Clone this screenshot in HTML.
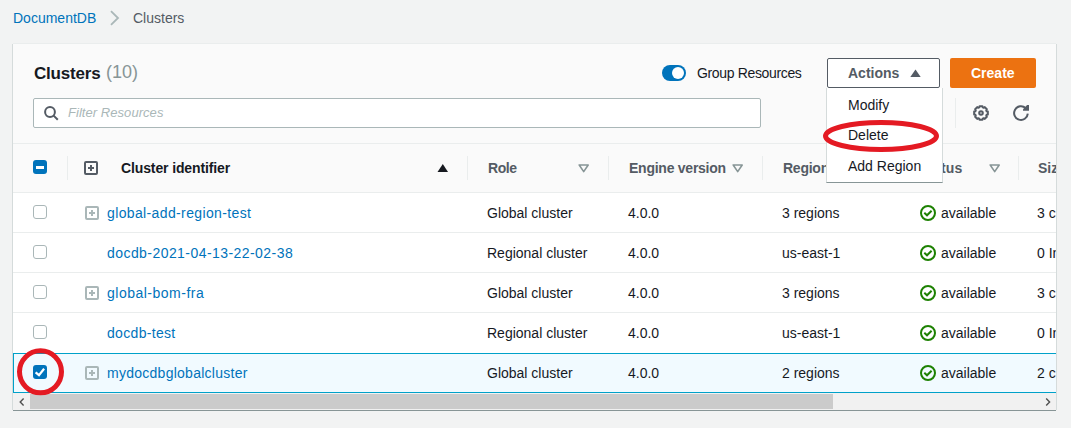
<!DOCTYPE html>
<html><head><meta charset="utf-8">
<style>
*{box-sizing:border-box;margin:0;padding:0}
html,body{width:1071px;height:428px;overflow:hidden;background:#f2f3f3;font-family:"Liberation Sans",sans-serif;font-size:14px;color:#16191f}
.t{position:absolute;white-space:nowrap;line-height:20px}
.a{position:absolute}
.b{font-weight:700}
.lnk{color:#0073bb}
.panel{position:absolute;left:13px;top:44px;width:1043px;height:366px;background:#fafafa;box-shadow:0 -1px 0 0 #eaeded,-1px 0 0 0 #d5dbdb,1px 0 0 0 #d5dbdb,0 1px 0 0 #879596;overflow:hidden}
.in{position:absolute;left:-13px;top:-44px;width:1071px;height:428px}
.row{position:absolute;left:13px;width:1043px;height:40px;background:#fff;border-bottom:1px solid #eaeded}
.sep{position:absolute;width:1px;height:24px;background:#eaeded}
.cb{position:absolute;left:33px;width:14px;height:14px;border:1px solid #aab7b8;border-radius:3px;background:#fff}
.ex{position:absolute;left:85px;width:14px;height:14px;border:2px solid #aab7b8;border-radius:2px}
.ex:before{content:"";position:absolute;left:2px;top:4px;width:6px;height:2px;background:#aab7b8}
.ex:after{content:"";position:absolute;left:4px;top:2px;width:2px;height:6px;background:#aab7b8}
.exd{border-color:#545b64}.exd:before,.exd:after{background:#545b64}
</style></head><body>
<div class="t lnk" style="left:13px;top:8px">DocumentDB</div>
<svg class="a" style="left:108px;top:10px" width="14" height="16" viewBox="0 0 14 16"><path d="M3 1.2 L10 8 L3 14.8" fill="none" stroke="#aab7b8" stroke-width="1.8"/></svg>
<div class="t" style="left:133px;top:8px;color:#545b64">Clusters</div>
<div class="panel"><div class="in">
<div class="t b" style="left:34px;top:64px;font-size:17px;letter-spacing:-0.2px">Clusters</div>
<div class="t" style="left:106px;top:62px;font-size:18px;color:#879596">(10)</div>
<div class="a" style="left:662px;top:65px;width:24px;height:16px;border-radius:8px;background:#0073bb"></div>
<div class="a" style="left:672px;top:67px;width:12px;height:12px;border-radius:6px;background:#fff"></div>
<div class="t" style="left:697px;top:63px;letter-spacing:-0.35px">Group Resources</div>
<div class="a" style="left:827px;top:58px;width:113px;height:30px;border:1px solid #545b64;border-radius:2px;background:#fff"></div>
<div class="t b" style="left:848px;top:63px;color:#545b64">Actions</div>
<svg class="a" style="left:910px;top:69px" width="11" height="9" viewBox="0 0 11 9"><path d="M0.3 8 L5.5 0.5 L10.7 8 Z" fill="#545b64"/></svg>
<div class="a" style="left:950px;top:58px;width:86px;height:30px;border-radius:2px;background:#ec7211"></div>
<div class="t b" style="left:971px;top:63px;color:#fff">Create</div>
<div class="a" style="left:33px;top:98px;width:728px;height:30px;border:1px solid #aab7b8;border-radius:2px;background:#fff"></div>
<svg class="a" style="left:43px;top:105px" width="17" height="17" viewBox="0 0 17 17"><circle cx="7" cy="7" r="4.9" fill="none" stroke="#545b64" stroke-width="2"/><path d="M10.6 10.6 L14.8 14.8" stroke="#545b64" stroke-width="2"/></svg>
<div class="t" style="left:68px;top:103px;font-size:13px;font-style:italic;color:#aab7b8;letter-spacing:0.05px">Filter Resources</div>
<div class="a" style="left:955px;top:98px;width:1px;height:30px;background:#eaeded"></div>
<svg class="a" style="left:973px;top:105px" width="16" height="16" viewBox="0 0 16 16"><path d="M6.28 2.36 L6.54 1.15 L9.46 1.15 L9.72 2.36 L10.77 2.79 L11.81 2.13 L13.87 4.19 L13.21 5.23 L13.64 6.28 L14.85 6.54 L14.85 9.46 L13.64 9.72 L13.21 10.77 L13.87 11.81 L11.81 13.87 L10.77 13.21 L9.72 13.64 L9.46 14.85 L6.54 14.85 L6.28 13.64 L5.23 13.21 L4.19 13.87 L2.13 11.81 L2.79 10.77 L2.36 9.72 L1.15 9.46 L1.15 6.54 L2.36 6.28 L2.79 5.23 L2.13 4.19 L4.19 2.13 L5.23 2.79Z" fill="none" stroke="#545b64" stroke-width="2" stroke-linejoin="round"/><circle cx="8" cy="8" r="1.8" fill="none" stroke="#545b64" stroke-width="2"/></svg>
<svg class="a" style="left:1013px;top:105px" width="16" height="16" viewBox="0 0 16 16"><path d="M14.8 8.6 A6.85 6.85 0 1 1 12.6 3.0" fill="none" stroke="#545b64" stroke-width="2"/><path d="M14.1 0 L16 0 L16 5.8 L10 5.8 L10 4.2 Z" fill="#545b64"/></svg>
<div class="a" style="left:13px;top:143px;width:1043px;height:50px;background:#fafafa;border-top:1px solid #eaeded;border-bottom:1px solid #eaeded"></div>
<div class="a" style="left:33px;top:160px;width:14px;height:14px;border-radius:3px;background:#0073bb"></div>
<div class="a" style="left:36px;top:165.5px;width:8px;height:3px;background:#fff"></div>
<div class="sep" style="left:67px;top:156px"></div>
<div class="sep" style="left:467px;top:156px"></div>
<div class="sep" style="left:608px;top:156px"></div>
<div class="sep" style="left:762px;top:156px"></div>
<div class="sep" style="left:1018px;top:156px"></div>
<div class="ex exd" style="left:84px;top:161px"></div>
<div class="t b" style="left:121px;top:158px;letter-spacing:-0.12px">Cluster identifier</div>
<svg class="a" style="left:437px;top:164px" width="12" height="9" viewBox="0 0 12 9"><path d="M0.5 8 L5.8 0 L11 8 Z" fill="#16191f"/></svg>
<div class="t b" style="left:488px;top:158px;color:#545b64;letter-spacing:-0.4px">Role</div>
<svg class="a" style="left:578px;top:164px" width="12" height="9" viewBox="0 0 12 9"><path d="M1.2 1 L10.2 1 L5.7 7.6 Z" fill="none" stroke="#879596" stroke-width="1.6" stroke-linejoin="round"/></svg>
<div class="t b" style="left:629px;top:158px;color:#545b64;letter-spacing:-0.25px">Engine version</div>
<svg class="a" style="left:732px;top:164px" width="12" height="9" viewBox="0 0 12 9"><path d="M1.2 1 L10.2 1 L5.7 7.6 Z" fill="none" stroke="#879596" stroke-width="1.6" stroke-linejoin="round"/></svg>
<div class="t b" style="left:783px;top:158px;color:#545b64;letter-spacing:-0.25px">Region</div>
<div class="t b" style="left:919px;top:158px;color:#545b64;letter-spacing:0.1px">Status</div>
<svg class="a" style="left:989px;top:164px" width="12" height="9" viewBox="0 0 12 9"><path d="M1.2 1 L10.2 1 L5.7 7.6 Z" fill="none" stroke="#879596" stroke-width="1.6" stroke-linejoin="round"/></svg>
<div class="t b" style="left:1038px;top:158px;color:#545b64">Size</div>
<div class="row" style="top:193px"></div>
<div class="cb" style="top:205px"></div>
<div class="ex" style="top:206px"></div>
<div class="t lnk" style="left:107px;top:203px;letter-spacing:0.37px">global-add-region-test</div>
<div class="t" style="left:487px;top:203px">Global cluster</div>
<div class="t" style="left:628px;top:203px">4.0.0</div>
<div class="t" style="left:782px;top:203px">3 regions</div>
<svg class="a" style="left:920px;top:205px" width="16" height="16" viewBox="0 0 16 16"><circle cx="8" cy="8" r="7" fill="none" stroke="#1d8102" stroke-width="2"/><path d="M4.3 7.8 L7 10.3 L11.6 5.8" fill="none" stroke="#1d8102" stroke-width="2"/></svg>
<div class="t" style="left:941px;top:203px">available</div>
<div class="t" style="left:1037px;top:203px">3 clusters</div>
<div class="row" style="top:233px"></div>
<div class="cb" style="top:245px"></div>
<div class="t lnk" style="left:107px;top:243px;letter-spacing:0.44px">docdb-2021-04-13-22-02-38</div>
<div class="t" style="left:487px;top:243px">Regional cluster</div>
<div class="t" style="left:628px;top:243px">4.0.0</div>
<div class="t" style="left:782px;top:243px">us-east-1</div>
<svg class="a" style="left:920px;top:245px" width="16" height="16" viewBox="0 0 16 16"><circle cx="8" cy="8" r="7" fill="none" stroke="#1d8102" stroke-width="2"/><path d="M4.3 7.8 L7 10.3 L11.6 5.8" fill="none" stroke="#1d8102" stroke-width="2"/></svg>
<div class="t" style="left:941px;top:243px">available</div>
<div class="t" style="left:1037px;top:243px">0 Instances</div>
<div class="row" style="top:273px"></div>
<div class="cb" style="top:285px"></div>
<div class="ex" style="top:286px"></div>
<div class="t lnk" style="left:107px;top:283px;letter-spacing:0.5px">global-bom-fra</div>
<div class="t" style="left:487px;top:283px">Global cluster</div>
<div class="t" style="left:628px;top:283px">4.0.0</div>
<div class="t" style="left:782px;top:283px">3 regions</div>
<svg class="a" style="left:920px;top:285px" width="16" height="16" viewBox="0 0 16 16"><circle cx="8" cy="8" r="7" fill="none" stroke="#1d8102" stroke-width="2"/><path d="M4.3 7.8 L7 10.3 L11.6 5.8" fill="none" stroke="#1d8102" stroke-width="2"/></svg>
<div class="t" style="left:941px;top:283px">available</div>
<div class="t" style="left:1037px;top:283px">3 clusters</div>
<div class="row" style="top:313px;border-bottom-color:#fff"></div>
<div class="cb" style="top:325px"></div>
<div class="t lnk" style="left:107px;top:323px;letter-spacing:0.32px">docdb-test</div>
<div class="t" style="left:487px;top:323px">Regional cluster</div>
<div class="t" style="left:628px;top:323px">4.0.0</div>
<div class="t" style="left:782px;top:323px">us-east-1</div>
<svg class="a" style="left:920px;top:325px" width="16" height="16" viewBox="0 0 16 16"><circle cx="8" cy="8" r="7" fill="none" stroke="#1d8102" stroke-width="2"/><path d="M4.3 7.8 L7 10.3 L11.6 5.8" fill="none" stroke="#1d8102" stroke-width="2"/></svg>
<div class="t" style="left:941px;top:323px">available</div>
<div class="t" style="left:1037px;top:323px">0 Instances</div>
<div class="row" style="top:353px;background:#f1faff;border-bottom:none"></div>
<div class="a" style="left:13px;top:353px;width:1043px;height:1px;background:#00a1c9"></div>
<div class="a" style="left:13px;top:392px;width:1043px;height:1px;background:#00a1c9"></div>
<div class="a" style="left:13px;top:353px;width:1px;height:40px;background:#00a1c9"></div>
<div class="a" style="left:33px;top:365px;width:14px;height:14px;border-radius:3px;background:#0073bb"></div>
<svg class="a" style="left:33px;top:365px" width="14" height="14" viewBox="0 0 14 14"><path d="M2.6 7.3 L6 10.2 L11.1 3.8" fill="none" stroke="#fff" stroke-width="2.2"/></svg>
<div class="ex" style="top:366px"></div>
<div class="t lnk" style="left:107px;top:363px;letter-spacing:0.26px">mydocdbglobalcluster</div>
<div class="t" style="left:487px;top:363px">Global cluster</div>
<div class="t" style="left:628px;top:363px">4.0.0</div>
<div class="t" style="left:782px;top:363px">2 regions</div>
<svg class="a" style="left:920px;top:365px" width="16" height="16" viewBox="0 0 16 16"><circle cx="8" cy="8" r="7" fill="none" stroke="#1d8102" stroke-width="2"/><path d="M4.3 7.8 L7 10.3 L11.6 5.8" fill="none" stroke="#1d8102" stroke-width="2"/></svg>
<div class="t" style="left:941px;top:363px">available</div>
<div class="t" style="left:1037px;top:363px">2 clusters</div>
<div class="a" style="left:13px;top:393px;width:1043px;height:17px;background:#f1f1f1"></div>
<div class="a" style="left:30px;top:394px;width:803px;height:15px;background:#cbcbcb"></div>
<svg class="a" style="left:16px;top:396px" width="10" height="12" viewBox="0 0 10 12"><path d="M7.6 2.4 L4.2 5.9 L7.6 9.4" fill="none" stroke="#505050" stroke-width="1.4"/></svg>
<svg class="a" style="left:1043px;top:396px" width="10" height="12" viewBox="0 0 10 12"><path d="M3.2 2.4 L6.6 5.9 L3.2 9.4" fill="none" stroke="#505050" stroke-width="1.4"/></svg>
</div></div>
<div class="a" style="left:826px;top:88px;width:117px;height:95px;background:#fff;border:1px solid #d5dbdb;border-top:none;border-bottom:1px solid #879596"></div>
<div class="t" style="left:848px;top:95px">Modify</div>
<div class="t" style="left:848px;top:125px">Delete</div>
<div class="t" style="left:848px;top:156px">Add Region</div>
<svg class="a" style="left:0;top:0" width="1071" height="428" viewBox="0 0 1071 428"><ellipse cx="881" cy="136" rx="55.5" ry="13.5" fill="none" stroke="#e41a23" stroke-width="5"/><circle cx="40.5" cy="371.8" r="21" fill="none" stroke="#e41a23" stroke-width="5"/></svg>
</body></html>
